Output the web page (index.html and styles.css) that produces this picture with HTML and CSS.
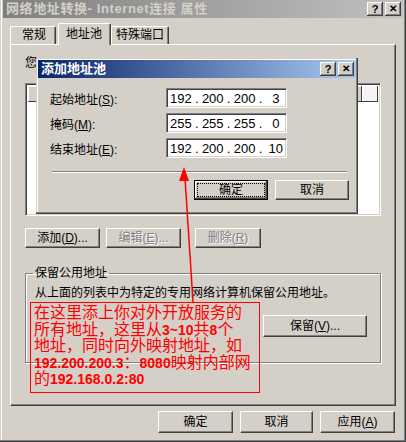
FILE: index.html
```html
<!DOCTYPE html>
<html lang="zh-CN">
<head>
    <meta charset="UTF-8">
    <title>网络地址转换- Internet连接 属性</title>
    <link rel="stylesheet" href="styles.css">
</head>
<body>
    <div class="window">
        <div class="titlebar inactive">
            <span class="title-text">网络地址转换- Internet连接 属性</span>
            <div class="title-buttons">
                <span class="cap-btn">?</span>
                <span class="cap-btn close">&#x2715;</span>
            </div>
        </div>

        <div class="tabs">
            <div class="tab">常规</div>
            <div class="tab selected">地址池</div>
            <div class="tab">特殊端口</div>
        </div>

        <div class="panel">
            <div class="panel-label">您</div>
            <div class="listbox">
                <div class="list-header">
                    <span class="col col-a"></span>
                    <span class="col col-b"></span>
                    <span class="col col-c"></span>
                </div>
            </div>
            <div class="btn-row">
                <button class="btn wide">添加(<u>D</u>)...</button>
                <button class="btn wide" disabled>编辑(<u>E</u>)...</button>
                <button class="btn wide" disabled>删除(<u>R</u>)</button>
            </div>

            <fieldset class="group">
                <legend>保留公用地址</legend>
                <div class="group-text">从上面的列表中为特定的专用网络计算机保留公用地址。</div>
                <div class="group-actions">
                    <button class="btn reserve">保留(<u>V</u>)...</button>
                </div>
            </fieldset>
        </div>

        <div class="footer">
            <button class="btn foot">确定</button>
            <button class="btn foot">取消</button>
            <button class="btn foot">应用(<u>A</u>)</button>
        </div>

        <!-- modal dialog on top -->
        <div class="dialog">
            <div class="titlebar active">
                <span class="title-text">添加地址池</span>
                <div class="title-buttons">
                    <span class="cap-btn">?</span>
                    <span class="cap-btn close">&#x2715;</span>
                </div>
            </div>
            <div class="dialog-body">
                <div class="field">
                    <label>起始地址(<u>S</u>):</label>
                    <div class="ip-box"><span>192</span><i>.</i><span>200</span><i>.</i><span>200</span><i>.</i><span>3</span></div>
                </div>
                <div class="field">
                    <label>掩码(<u>M</u>):</label>
                    <div class="ip-box"><span>255</span><i>.</i><span>255</span><i>.</i><span>255</span><i>.</i><span>0</span></div>
                </div>
                <div class="field">
                    <label>结束地址(<u>E</u>):</label>
                    <div class="ip-box"><span>192</span><i>.</i><span>200</span><i>.</i><span>200</span><i>.</i><span>10</span></div>
                </div>
                <div class="separator"></div>
                <div class="dialog-actions">
                    <button class="btn dlg focused"><span class="focus-ring">确定</span></button>
                    <button class="btn dlg">取消</button>
                </div>
            </div>
        </div>

        <!-- red annotation -->
        <svg class="arrow" width="406" height="442" viewBox="0 0 406 442">
            <line x1="193" y1="302" x2="185" y2="178" stroke="#ff0000" stroke-width="1.5"/>
            <polygon points="184,167 179,181 189,181" fill="#ff0000"/>
        </svg>
        <div class="note">
            <div class="note-line">在这里添上你对外开放服务的</div>
            <div class="note-line">所有地址，这里从<b>3~10</b>共<b>8</b>个</div>
            <div class="note-line">地址，同时向外映射地址，如</div>
            <div class="note-line"><b>192.200.200.3</b>：<b>8080</b>映射内部网</div>
            <div class="note-line">的<b>192.168.0.2:80</b></div>
        </div>
    </div>
</body>
</html>
```

FILE: styles.css
```css
* {
    box-sizing: border-box;
}

body {
    margin: 0;
    background: #d4d0c8;
    font-family: "Liberation Sans", "Noto Sans CJK SC", sans-serif;
    font-size: 12px;
    color: #000;
}

u {
    text-decoration: underline;
}

.window {
    position: relative;
    width: 406px;
    height: 442px;
    background: #d4d0c8;
    padding: 0 3px 3px 3px;
    box-shadow: inset -1px -1px #404040, inset -2px -2px #808080, inset 1px 0 #d4d0c8, inset 2px 0 #fff;
}

/* title bars */
.titlebar {
    height: 18px;
    display: flex;
    align-items: center;
    justify-content: space-between;
    padding: 0 2px 0 3px;
}

.titlebar.inactive {
    background: linear-gradient(to right, #808080, #c0c0c0);
}

.titlebar.active {
    background: linear-gradient(to right, #0a246a, #a6caf0);
}

.title-text {
    font-weight: bold;
    font-size: 13px;
    line-height: 14px;
    white-space: nowrap;
}

.inactive .title-text {
    color: #d4d0c8;
    letter-spacing: 0.6px;
}

.active .title-text {
    color: #fff;
}

.title-buttons {
    display: flex;
    gap: 2px;
}

.cap-btn {
    width: 16px;
    height: 14px;
    background: #d4d0c8;
    box-shadow: inset -1px -1px #404040, inset 1px 1px #fff, inset -2px -2px #808080;
    font-weight: bold;
    font-size: 11px;
    line-height: 14px;
    text-align: center;
    color: #000;
}

.cap-btn.close {
    font-size: 10px;
}

/* tabs */
.tabs {
    display: flex;
    align-items: flex-end;
    height: 26px;
    padding-left: 7px;
}

.tab {
    height: 18px;
    padding: 0 4px;
    line-height: 17px;
    font-size: 12px;
    white-space: nowrap;
    border-top: 1px solid #fff;
    border-left: 1px solid #fff;
    border-right: 1px solid #404040;
    border-radius: 2px 2px 0 0;
    box-shadow: inset -1px 0 #808080;
}

.tab:first-child {
    width: 46px;
    padding-left: 11px;
}

.tab.selected {
    height: 22px;
    width: 53px;
    margin-left: 2px;
    padding: 2px 7px 0;
    position: relative;
    top: 1px;
    background: #d4d0c8;
    z-index: 1;
}

/* tab content */
.panel {
    margin: 0 7px;
    height: 362px;
    padding: 10px 14px 0 14px;
    border-top: 1px solid #fff;
    border-left: 1px solid #fff;
    border-right: 1px solid #404040;
    border-bottom: 1px solid #404040;
    box-shadow: inset -1px -1px #808080;
}

.panel-label {
    height: 16px;
    line-height: 16px;
}

.listbox {
    margin-top: 12px;
    height: 133px;
    background: #fff;
    border: 1px solid;
    border-color: #808080 #fff #fff #808080;
    box-shadow: inset 1px 1px #404040, inset -1px -1px #d4d0c8;
    padding: 2px;
}

.list-header {
    display: flex;
    height: 16px;
}

.col {
    background: #d4d0c8;
    box-shadow: inset -1px -1px #404040, inset 1px 1px #fff;
    line-height: 16px;
}

.col-a {
    width: 168px;
}

.col-b {
    width: 166px;
}

.col-c {
    flex: 1;
    background: #f4f4f4;
}

.btn-row {
    display: flex;
    gap: 6px;
    margin-top: 12px;
}

/* buttons */
.btn {
    font-family: inherit;
    font-size: 12px;
    color: #000;
    background: #d4d0c8;
    border: 1px solid;
    border-color: #fff #404040 #404040 #fff;
    box-shadow: inset -1px -1px #808080;
    padding: 0;
    height: 20px;
    line-height: 16px;
}

.btn:disabled {
    color: #808080;
    text-shadow: 1px 1px #fff;
}

.btn.wide {
    width: 75px;
}

.btn-row .btn:nth-child(3) {
    margin-left: 8px;
    width: 66px;
}

/* group box */
.group {
    margin: 18px 0 0 0;
    padding: 5px 8px 0 8px;
    height: 97px;
    border: 1px solid #808080;
    box-shadow: 1px 1px 0 #fff, inset 1px 1px 0 #fff;
}

.group legend {
    padding: 0 2px;
    margin-left: -1px;
    line-height: 14px;
}

.group-text {
    line-height: 16px;
    padding-left: 1px;
}

.group-actions {
    display: flex;
    justify-content: flex-end;
    margin-top: 14px;
    padding-right: 5px;
}

.btn.reserve {
    width: 104px;
    height: 22px;
}

/* footer */
.footer {
    display: flex;
    justify-content: flex-end;
    gap: 7px;
    padding: 5px 8px 0 0;
}

.btn.foot {
    width: 75px;
    height: 22px;
}

.footer .btn:nth-child(2) {
    width: 73px;
}

/* dialog */
.dialog {
    position: absolute;
    left: 36px;
    top: 58px;
    width: 322px;
    height: 156px;
    background: #d4d0c8;
    padding: 2px;
    box-shadow: inset -1px -1px #404040, inset -2px -2px #808080, inset 1px 1px #d4d0c8, inset 2px 2px #fff;
}

.dialog-body {
    padding: 10px 0 0 12px;
}

.field {
    display: flex;
    align-items: center;
    height: 20px;
    margin-bottom: 5px;
}

.field label {
    width: 116px;
}

.ip-box {
    width: 121px;
    height: 20px;
    background: #fff;
    border: 1px solid;
    border-color: #808080 #fff #fff #808080;
    box-shadow: inset 1px 1px #404040, inset -1px -1px #d4d0c8;
    display: flex;
    align-items: center;
    padding: 0 0 0 3px;
    font-size: 13px;
}

.ip-box span {
    width: 22px;
    text-align: center;
}

.ip-box i {
    font-style: normal;
    width: 11px;
    text-align: center;
}

.separator {
    width: 295px;
    margin: 13px 0 0 2px;
    border-top: 1px solid #808080;
    border-bottom: 1px solid #fff;
}

.dialog-actions {
    display: flex;
    gap: 7px;
    margin: 7px 0 0 144px;
}

.btn.dlg {
    width: 74px;
    height: 20px;
}

.btn.focused {
    border-color: #000;
    box-shadow: inset -1px -1px #404040, inset 1px 1px #fff, inset -2px -2px #808080;
    padding: 2px;
}

.focus-ring {
    display: block;
    height: 14px;
    line-height: 13px;
    border: 1px dotted #000;
}

/* annotation */
.arrow {
    position: absolute;
    left: 0;
    top: 0;
    pointer-events: none;
}

.note {
    position: absolute;
    left: 30px;
    top: 302px;
    width: 230px;
    height: 91px;
    border: 1px solid #ff0000;
    padding: 2px 0 0 3px;
    color: #ff0000;
    font-size: 16px;
}

.note-line {
    height: 16.5px;
    line-height: 16.5px;
    white-space: nowrap;
}

.note b {
    font-family: "Liberation Sans", sans-serif;
    font-size: 14px;
    font-weight: bold;
}
```
